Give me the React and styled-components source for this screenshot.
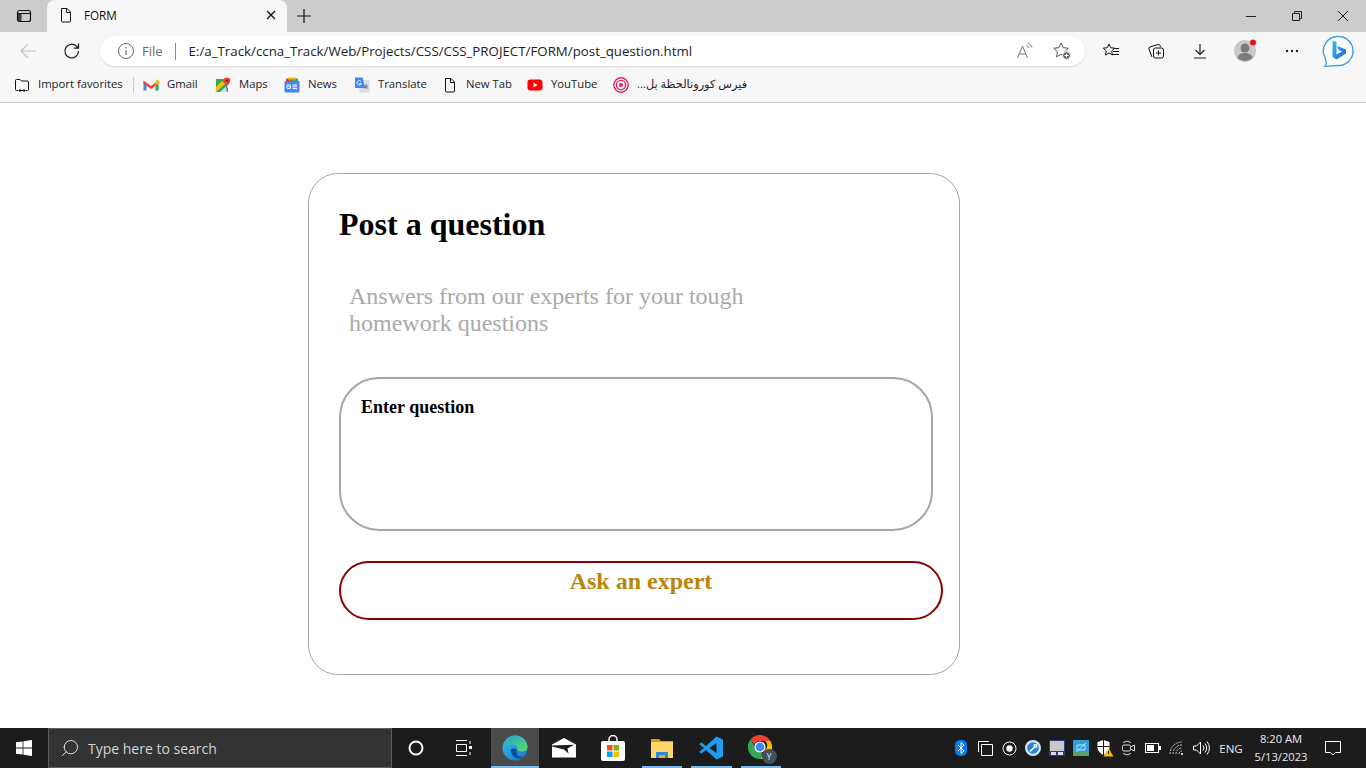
import React from 'react';
import styled, { createGlobalStyle } from 'styled-components';
import { Search } from 'lucide-react';

const GlobalStyle = createGlobalStyle`
  html, body { margin: 0; padding: 0; background: #fff; }
  body { width: 1366px; height: 768px; overflow: hidden; font-family: "Liberation Serif", serif; }
`;

const UI_FONT = '"Open Sans", "Noto Sans", "DejaVu Sans", sans-serif';

// browser top
function Svg({ size = 16, children }) {
  return <svg width={size} height={size} viewBox={`0 0 ${size} ${size}`} fill="none" stroke="currentColor" strokeWidth="1">{children}</svg>;
}

const PageIcon = () => (
  <Svg size={16}>
    <path d="M3.500 1.500h5.500l3.500 3.500v9a1 1 0 0 1-1 1h-7a1 1 0 0 1-1-1z M8.500 1.500v4h4" stroke="#111" />
  </Svg>
);

const TabsIcon = () => (
  <Svg size={16}>
    <rect x="1.500" y="2.500" width="13" height="11" rx="2" stroke="#111" strokeWidth="1.200" />
    <path d="M1.500 5.500h13" stroke="#111" />
    <rect x="2" y="5" width="3.500" height="8" fill="#111" stroke="none" opacity="0.75" />
  </Svg>
);

const GmailIcon = () => (
  <svg width="16" height="16" viewBox="0 0 16 16">
    <path d="M0.500 4.500v9h3V7z" fill="#4285f4" />
    <path d="M12.500 7v6.500h3v-9z" fill="#34a853" />
    <path d="M0.500 3.500 8 9l7.500-5.500v3L8 12 .5 6.500z" fill="#ea4335" />
    <path d="M12.500 4 14 2.800a1 1 0 0 1 1.500 .7v3L12.500 8.500z" fill="#fbbc04" />
  </svg>
);

const MapsIcon = () => (
  <svg width="16" height="16" viewBox="0 0 16 16">
    <path d="M1 2h11v13H1z" fill="#34a853" />
    <path d="M1 10 7 4l3 3-9 8z" fill="#fbbc04" />
    <path d="M5 15 11 9.500 12.500 15z" fill="#dfe3e8" />
    <path d="M1 2h5L1 7z" fill="#34a853" />
    <path d="M10 8 13 11v4h-1z" fill="#4285f4" />
    <path d="M12 0.500a3.300 3.300 0 0 1 3.300 3.300c0 2.200-2.300 3.600-3.300 6-1-2.400-3.300-3.800-3.300-6A3.300 3.300 0 0 1 12 .5z" fill="#ea4335" />
    <circle cx="12" cy="3.800" r="1.200" fill="#a50e0e" />
  </svg>
);

const NewsIcon = () => (
  <svg width="16" height="16" viewBox="0 0 16 16">
    <path d="M2 1.500h6v3H2z" fill="#ea4335" />
    <path d="M8 1.500h6v3H8z" fill="#34a853" />
    <path d="M4 0.500h8v2H4z" fill="#fbbc04" />
    <rect x="0.500" y="4" width="15" height="11.500" rx="1" fill="#4285f4" />
    <path d="M3 8h3.400v3.400H3V8M4.700 9.700h1.700M8.500 8h4.500M8.500 9.800h4.500M8.500 11.600h4.500" stroke="#fff" strokeWidth="1" fill="none" />
  </svg>
);

const TranslateIcon = () => (
  <svg width="16" height="16" viewBox="0 0 16 16">
    <path d="M7 3h8.500v12.500H5z" fill="#dadce0" />
    <path d="M12 6.500l.8 2 2 .2-1.600 1.300.5 2-1.700-1.100-1.700 1.100.5-2-1.600-1.300 2-.2z" fill="#80868b" />
    <path d="M1 0.500h7.500L11 11H1z" fill="#4285f4" />
    <path d="M7 4.500a2.200 2.200 0 1 0 .4 2H5.200" stroke="#fff" fill="none" strokeWidth="0.900" />
  </svg>
);

const YoutubeIcon = () => (
  <svg width="16" height="16" viewBox="0 0 16 16">
    <rect x="0.500" y="2.500" width="15" height="11" rx="3" fill="#f00" />
    <path d="M6.500 5.500 10.500 8l-4 2.500z" fill="#fff" />
  </svg>
);

const TargetIcon = () => (
  <svg width="16" height="16" viewBox="0 0 16 16" fill="none">
    <circle cx="8" cy="8" r="7.200" stroke="#e0245e" strokeWidth="1.400" />
    <circle cx="8" cy="8" r="4.600" stroke="#e0245e" strokeWidth="1.400" />
    <circle cx="8" cy="8" r="2" fill="#e0245e" />
  </svg>
);

const ImportIcon = () => (
  <Svg size={16}>
    <path d="M4 13.500H2.500a1 1 0 0 1-1-1v-9a1 1 0 0 1 1-1H6l1.500 1.500h6a1 1 0 0 1 1 1v7.500a1 1 0 0 1-1 1H12" stroke="#111" />
    <path d="M5 13.500h6M6.500 12 5 13.500 6.500 15M9.500 12l1.500 1.500L9.500 15" stroke="#111" />
  </Svg>
);

const Bookmarks = [
  { icon: <GmailIcon />, label: 'Gmail', w: 72 },
  { icon: <MapsIcon />, label: 'Maps', w: 69 },
  { icon: <NewsIcon />, label: 'News', w: 70 },
  { icon: <TranslateIcon />, label: 'Translate', w: 88 },
  { icon: <PageIcon />, label: 'New Tab', w: 85 },
  { icon: <YoutubeIcon />, label: 'YouTube', w: 86 },
];

const Chrome = styled.header`
  flex: none;
  display: flex;
  flex-direction: column;
  font-family: ${UI_FONT};
  color: #222;
`;

const TabStrip = styled.div`
  height: 32px;
  background: #cccccc;
  display: flex;
  align-items: flex-end;
  color: #111;
`;

const TabToggle = styled.div`
  width: 47px;
  height: 32px;
  display: flex;
  align-items: center;
  justify-content: center;
`;

const Tab = styled.div`
  width: 240px;
  height: 32px;
  box-sizing: border-box;
  padding: 0 8px 2px 11px;
  background: #f7f7f7;
  border-radius: 8px 8px 0 0;
  display: flex;
  align-items: center;
  gap: 10px;
  font-size: 11.7px;
`;

const TabTitle = styled.span`
  flex: 1;
`;

const NewTab = styled.div`
  width: 34px;
  height: 32px;
  display: flex;
  align-items: center;
  justify-content: center;
`;

const WindowButtons = styled.div`
  margin-left: auto;
  display: flex;
  height: 32px;
`;

const WindowButton = styled.div`
  width: 46px;
  height: 32px;
  display: flex;
  align-items: center;
  justify-content: center;
`;

const Toolbar = styled.div`
  height: 38px;
  background: #f7f7f7;
  display: flex;
  align-items: center;
  padding-left: 10px;
`;

const NavButton = styled.div`
  width: ${p => p.$w || 36}px;
  height: 30px;
  flex: none;
  display: flex;
  align-items: center;
  justify-content: center;
  color: ${p => p.$color || '#222'};
  position: relative;
`;

const AddressBar = styled.div`
  width: 985px;
  height: 30px;
  margin-left: 2px;
  margin-right: 4px;
  flex: none;
  box-sizing: border-box;
  padding: 0 5px 0 18px;
  background: #fff;
  border-radius: 15px;
  box-shadow: 0 1px 2px rgba(0, 0, 0, 0.12);
  display: flex;
  align-items: center;
  font-size: 13.300px;
`;

const FileLabel = styled.span`
  margin-left: 8px;
  font-size: 13px;
  color: #6a6a6a;
  padding-right: 12px;
  border-right: 1px solid #8a8a8a;
  line-height: 17px;
`;

const Url = styled.span`
  margin-left: 13px;
  flex: 1;
  color: #222;
  white-space: nowrap;
`;

const BookmarkBar = styled.div`
  height: 29px;
  padding: 0 0 3px 14px;
  background: #f7f7f7;
  border-bottom: 1px solid #c6c6c6;
  display: flex;
  align-items: center;
  font-size: 11.300px;
  line-height: 16px;
  white-space: nowrap;
`;

const Bookmark = styled.div`
  width: ${p => p.$w}px;
  flex: none;
  display: flex;
  align-items: center;
  gap: 8px;
  overflow: hidden;
`;

const BookmarkLabel = styled.span`
  margin-top: -2px;
`;

const BookmarkDivider = styled.div`
  width: 1px;
  height: 16px;
  background: #c8c8c8;
  margin-right: 9px;
`;

// page
const Shell = styled.div`
  width: 1366px;
  height: 768px;
  display: flex;
  flex-direction: column;
`;

const Page = styled.main`
  flex: 1;
  background: #fff;
  padding: 70px 0 0 308px;
`;

const Card = styled.section`
  width: 652px;
  height: 502px;
  box-sizing: border-box;
  border: 1px solid #aaa69d;
  border-radius: 30px;
  padding: 29px 0 0 30px;
`;

const Title = styled.h1`
  margin: 0;
  font-size: 32px;
  line-height: 42px;
  font-weight: bold;
  color: #000;
`;

const Subtitle = styled.p`
  margin: 38px 0 0 10px;
  width: 420px;
  font-size: 24px;
  line-height: 27px;
  color: #aaaaaa;
`;

const QuestionBox = styled.div`
  margin-top: 40px;
  width: 594px;
  height: 154px;
  box-sizing: border-box;
  border: 2px solid #aaa69d;
  border-radius: 40px;
  padding: 18px 20px;
  font-size: 18px;
  line-height: 21px;
  font-weight: bold;
  color: #000;
`;

const AskButton = styled.div`
  margin-top: 30px;
  width: 604px;
  height: 59px;
  box-sizing: border-box;
  border: 2px solid #8b0000;
  border-radius: 30px;
  padding-top: 4px;
  text-align: center;
  font-size: 24px;
  line-height: 28px;
  font-weight: bold;
  color: #b8860b;
`;

// taskbar
const Taskbar = styled.footer`
  flex: none;
  height: 40px;
  background: #1c1c1c;
  display: flex;
  align-items: stretch;
  font-family: ${UI_FONT};
  color: #fff;
`;

const StartButton = styled.div`
  width: 48px;
  display: flex;
  align-items: center;
  justify-content: center;
`;

const SearchBox = styled.div`
  width: 344px;
  box-sizing: border-box;
  background: #333333;
  border: 1px solid #5f5f5f;
  display: flex;
  align-items: center;
  gap: 8px;
  padding-left: 11px;
  font-size: 14px;
  color: #d4d4d4;
`;

const TaskButton = styled.div`
  width: ${p => p.$w || 49}px;
  box-sizing: border-box;
  padding-right: ${p => p.$shift || 0}px;
  flex: none;
  position: relative;
  display: flex;
  align-items: center;
  justify-content: center;
  background: ${p => (p.$active ? '#4a4a4a' : 'transparent')};
  &::after {
    content: "";
    display: ${p => (p.$open ? 'block' : 'none')};
    position: absolute;
    left: ${p => (p.$active ? 0 : 5)}px;
    right: ${p => (p.$active ? 0 : 4)}px;
    bottom: 0;
    height: 2px;
    background: #76b9ed;
  }
`;

const Tray = styled.div`
  margin-left: auto;
  display: flex;
  align-items: center;
`;

const TrayIcon = styled.div`
  width: 24px;
  height: 40px;
  flex: none;
  display: flex;
  align-items: center;
  justify-content: center;
`;

const Lang = styled.div`
  width: 30px;
  margin-left: 3px;
  font-size: 11.500px;
  color: #e8e8e8;
  text-align: center;
`;

const Clock = styled.div`
  width: 56px;
  margin-left: 7px;
  font-size: 11.200px;
  line-height: 18px;
  text-align: center;
  color: #e8e8e8;
  white-space: nowrap;
`;

const Notify = styled.div`
  width: 46px;
  margin: 0 10px 0 1px;
  height: 40px;
  display: flex;
  align-items: center;
  justify-content: center;
`;

const WindowsLogo = () => (
  <svg width="16" height="16" viewBox="0 0 16 16" fill="#fff">
    <path d="M0 2.300 6.600 1.400v6.100H0zM7.400 1.300 16 0v7.500H7.400zM0 8.400h6.600v6.200L0 13.700zM7.400 8.400H16V16l-8.600-1.200z" />
  </svg>
);

const EdgeIcon = () => (
  <svg width="26" height="26" viewBox="0 0 26 26">
    <defs>
      <linearGradient id="edgeA" x1="0" y1="0" x2="1" y2="1">
        <stop offset="0" stopColor="#35c1f1" />
        <stop offset="1" stopColor="#1b6fc4" />
      </linearGradient>
      <linearGradient id="edgeB" x1="0" y1="0" x2="1" y2="1">
        <stop offset="0" stopColor="#1f9fd8" />
        <stop offset="1" stopColor="#5fdc6a" />
      </linearGradient>
    </defs>
    <circle cx="13" cy="13" r="12.500" fill="url(#edgeA)" />
    <path d="M1 11C3 4 9 .5 13 .5c7 0 12.500 5.500 12.500 11.500 0 3-2.500 4.500-5.500 4.500-2.500 0-4.500-.8-4.500-2 0-2-1-5-5-5-4 0-7 2-9.500 1.500z" fill="url(#edgeB)" />
    <path d="M9 15c0 5 4 8.500 8 8.500 2 0 4-1 5-2-3 1-7 0-7.500-4-.2-2 .5-3 .5-3-3-1.500-6-1.500-6 .5z" fill="#0c4f9e" />
  </svg>
);

const MailIcon = () => (
  <svg width="24" height="20" viewBox="0 0 24 20">
    <path d="M0 6.500 12 0l12 6.500V19.500H0z" fill="#fff" />
    <path d="M0 7.500 22 6.800 15.500 10.500 16.500 15.500 12 11.500 0 8.500z" fill="#1c1c1c" />
  </svg>
);

const StoreIcon = () => (
  <svg width="24" height="26" viewBox="0 0 24 26">
    <path d="M8 7V4.500a4 4 0 0 1 8 0V7" stroke="#fff" strokeWidth="1.500" fill="none" />
    <rect x="0" y="6" width="24" height="20" rx="2" fill="#fff" />
    <rect x="6" y="10" width="5.500" height="5.500" fill="#f25022" />
    <rect x="12.500" y="10" width="5.500" height="5.500" fill="#7fba00" />
    <rect x="6" y="16.500" width="5.500" height="5.500" fill="#00a4ef" />
    <rect x="12.500" y="16.500" width="5.500" height="5.500" fill="#ffb900" />
  </svg>
);

const FolderIcon = () => (
  <svg width="22" height="20" viewBox="0 0 22 20">
    <path d="M0 1h8l2 2h12v4H0z" fill="#d99a1c" />
    <path d="M0 4h22v16H0z" fill="#ffd768" />
    <path d="M5 14h12v6h-3v-3H8v3H5z" fill="#2b88d8" />
    <path d="M8 17h6v3H8z" fill="#e8a92a" />
  </svg>
);

const VscodeIcon = () => (
  <svg width="24" height="24" viewBox="0 0 24 24">
    <path d="M17.500 0.500 24 3.500v17l-6.500 3L7 14l-4.500 3.500L0 16l5-4-5-4 2.500-1.500L7 10z" fill="#1f9cf0" />
    <path d="M17.500 7 10.500 12l7 5z" fill="#1c1c1c" />
  </svg>
);

const Badge = styled.span`
  position: absolute;
  right: -3px;
  bottom: -3px;
  width: 15px;
  height: 15px;
  border-radius: 50%;
  background: #42505c;
  color: #dfe3e6;
  font-size: 9px;
  line-height: 15px;
  text-align: center;
`;

const ChromeWrap = styled.span`
  position: relative;
  display: block;
  width: 26px;
  height: 26px;
`;

const ChromeIcon = () => (
  <ChromeWrap>
    <svg width="24" height="24" viewBox="0 0 24 24">
      <path d="M12 0a12 12 0 0 1 10.400 6H12a6 6 0 0 0-5.600 3.800L2.500 4.500A12 12 0 0 1 12 0z" fill="#ea4335" />
      <path d="M22.400 6A12 12 0 0 1 12 24l5.200-9a6 6 0 0 0 0-9z" fill="#fbbc04" />
      <path d="M2.500 4.500 7.500 13a6 6 0 0 0 7 4.500L12 24A12 12 0 0 1 2.500 4.500z" fill="#34a853" />
      <circle cx="12" cy="12" r="5" fill="#4285f4" stroke="#fff" strokeWidth="1.200" />
    </svg>
    <Badge>Y</Badge>
  </ChromeWrap>
);

const BingIcon = () => (
  <svg width="32" height="32" viewBox="0 0 32 32">
    <defs>
      <linearGradient id="bingA" x1="0" y1="0" x2="1" y2="1">
        <stop offset="0" stopColor="#36bdf0" />
        <stop offset="1" stopColor="#2a62d8" />
      </linearGradient>
    </defs>
    <path d="M16.500 1.500a14.500 14.500 0 0 1 0 29c-4 0-8 .5-13.500 1 1.500-2 1.500-5 .2-8.500A14.500 14.500 0 0 1 16.500 1.500z" fill="#fff" stroke="#3aa0ea" strokeWidth="1.400" />
    <path d="M10.500 5.500 14.500 7v12.500l5.500-3-3.500-1.800-1.300-3.700L24 14.500v4l-9.500 6-4-2.500z" fill="url(#bingA)" />
  </svg>
);

export default function App() {
  return (
    <Shell>
      <GlobalStyle />
      <Chrome>
        <TabStrip>
          <TabToggle><TabsIcon /></TabToggle>
          <Tab>
            <PageIcon />
            <TabTitle>FORM</TabTitle>
            <Svg size={16}><path d="M4 4l8 8M12 4l-8 8" stroke="#111" strokeWidth="1.300" /></Svg>
          </Tab>
          <NewTab><Svg size={16}><path d="M8 1v14M1 8h14" stroke="#111" strokeWidth="1.200" /></Svg></NewTab>
          <WindowButtons>
            <WindowButton><Svg size={12}><path d="M1 6.500h10" stroke="#222" /></Svg></WindowButton>
            <WindowButton><Svg size={12}><path d="M1.500 3.500h7v7h-7zM3.500 3.500v-2h7v7h-2" stroke="#222" /></Svg></WindowButton>
            <WindowButton><Svg size={12}><path d="M1 1l10 10M11 1L1 11" stroke="#222" /></Svg></WindowButton>
          </WindowButtons>
        </TabStrip>

        <Toolbar>
          <NavButton $color="#c4c4c4">
            <Svg size={18}><path d="M17 9H2M9 2 2 9l7 7" stroke="#c4c4c4" strokeWidth="1.200" /></Svg>
          </NavButton>
          <NavButton $w={52}>
            <Svg size={18}><path d="M15.500 9a6.800 6.800 0 1 1-2-4.800L15.500 6.200M15.500 1.500v4.700h-4.700" stroke="#222" strokeWidth="1.300" /></Svg>
          </NavButton>
          <AddressBar>
            <Svg size={16}>
              <circle cx="8" cy="8" r="7.500" stroke="#6a6a6a" />
              <path d="M8 7v5M8 4v1.500" stroke="#6a6a6a" strokeWidth="1.200" />
            </Svg>
            <FileLabel>File</FileLabel>
            <Url>E:/a_Track/ccna_Track/Web/Projects/CSS/CSS_PROJECT/FORM/post_question.html</Url>
            <NavButton $w={37}>
              <Svg size={18}>
                <path d="M1.500 16 6.500 4l5 12M3.200 12h6.600" stroke="#777" />
                <path d="M10.500 3.500a4 4 0 0 1 2.500 2.500M12 1a7 7 0 0 1 4 4.500" stroke="#777" />
              </Svg>
            </NavButton>
            <NavButton $w={37}>
              <Svg size={20}>
                <path d="M9 2l2.200 4.600 5 .7-3.600 3.500.9 5L9 13.400 4.500 15.800l.9-5L1.800 7.300l5-.7z" stroke="#555" />
                <circle cx="14.500" cy="14.500" r="4" fill="#666" stroke="#fff" />
                <path d="M12.500 14.500h4M14.500 12.500v4" stroke="#fff" />
              </Svg>
            </NavButton>
          </AddressBar>
          <NavButton $w={44}>
            <Svg size={18}>
              <path d="M7 2l1.700 3.700 4 .5-3 2.800.8 4L7 11l-3.500 2 .8-4-3-2.800 4-.5z" stroke="#111" />
              <path d="M12 6.500h5M11 9.500h6M10 12.500h7" stroke="#111" />
            </Svg>
          </NavButton>
          <NavButton $w={45}>
            <Svg size={18}>
              <path d="M5 15 2 7a1.500 1.500 0 0 1 1-2l8-2.500a1.500 1.500 0 0 1 2 1L13.500 5" stroke="#111" />
              <rect x="6.500" y="6" width="10" height="10" rx="2" stroke="#111" fill="#f7f7f7" />
              <path d="M11.500 8.500v5M9 11h5" stroke="#111" />
            </Svg>
          </NavButton>
          <NavButton $w={44}>
            <Svg size={16}><path d="M8 1v10M3.500 7 8 11.500 12.500 7M2 15h12" stroke="#222" strokeWidth="1.200" /></Svg>
          </NavButton>
          <NavButton $w={46}>
            <svg width="24" height="24" viewBox="0 0 24 24">
              <circle cx="12" cy="12" r="11" fill="#c9c9c9" />
              <circle cx="12" cy="9" r="4.500" fill="#7b7b7b" />
              <path d="M4.500 19a7.500 5 0 0 1 15 0 11 11 0 0 1-15 0z" fill="#7b7b7b" />
              <circle cx="20" cy="3.500" r="3" fill="#e81123" />
            </svg>
          </NavButton>
          <NavButton $w={48}>
            <svg width="16" height="4" viewBox="0 0 16 4" fill="#222">
              <circle cx="3" cy="2" r="1.200" /><circle cx="8" cy="2" r="1.200" /><circle cx="13" cy="2" r="1.200" />
            </svg>
          </NavButton>
          <NavButton $w={44}><BingIcon /></NavButton>
        </Toolbar>

        <BookmarkBar>
          <Bookmark $w={119}><ImportIcon /><BookmarkLabel>Import favorites</BookmarkLabel></Bookmark>
          <BookmarkDivider />
          {Bookmarks.map(b => (
            <Bookmark key={b.label} $w={b.w}>{b.icon}<BookmarkLabel>{b.label}</BookmarkLabel></Bookmark>
          ))}
          <Bookmark $w={140}><TargetIcon /><BookmarkLabel dir="rtl">فيرس كورونالحظة بل...</BookmarkLabel></Bookmark>
        </BookmarkBar>
      </Chrome>

      <Page>
        <Card>
          <Title>Post a question</Title>
          <Subtitle>Answers from our experts for your tough homework questions</Subtitle>
          <QuestionBox>Enter question</QuestionBox>
          <AskButton>Ask an expert</AskButton>
        </Card>
      </Page>

      <Taskbar>
        <StartButton><WindowsLogo /></StartButton>
        <SearchBox>
          <Search size={20} color="#e0e0e0" strokeWidth={1.200} style={{ transform: 'scaleX(-1)' }} />
          Type here to search
        </SearchBox>
        <TaskButton $w={48}>
          <svg width="16" height="16" viewBox="0 0 16 16" fill="none"><circle cx="8" cy="8" r="6.500" stroke="#fff" strokeWidth="2" /></svg>
        </TaskButton>
        <TaskButton $w={51} $shift={3}>
          <svg width="18" height="16" viewBox="0 0 18 16" fill="none" stroke="#fff">
            <path d="M1 .5h11M1 15.500h11M1.500 4.500h10v7h-10z" />
            <path d="M15 1v3M15 12v3" />
            <rect x="14" y="6" width="3" height="3" fill="#fff" stroke="none" />
          </svg>
        </TaskButton>
        <TaskButton $w={48} $active $open><EdgeIcon /></TaskButton>
        <TaskButton><MailIcon /></TaskButton>
        <TaskButton><StoreIcon /></TaskButton>
        <TaskButton $open><FolderIcon /></TaskButton>
        <TaskButton $w={50} $open><VscodeIcon /></TaskButton>
        <TaskButton $open><ChromeIcon /></TaskButton>

        <Tray>
          <TrayIcon>
            <svg width="12" height="16" viewBox="0 0 12 16">
              <rect width="12" height="16" rx="5" fill="#0a7cf0" />
              <path d="M3 5l6 6-3 2.500v-11L9 5l-6 6" stroke="#fff" fill="none" />
            </svg>
          </TrayIcon>
          <TrayIcon>
            <svg width="15" height="15" viewBox="0 0 15 15" fill="none" stroke="#fff">
              <path d="M.5 11V.5H11M3.500 3.500h11v11h-11z" />
            </svg>
          </TrayIcon>
          <TrayIcon>
            <svg width="15" height="15" viewBox="0 0 15 15">
              <circle cx="7.500" cy="7.500" r="6.500" fill="none" stroke="#fff" />
              <circle cx="7.500" cy="7.500" r="3.200" fill="#fff" />
            </svg>
          </TrayIcon>
          <TrayIcon>
            <svg width="16" height="16" viewBox="0 0 16 16">
              <circle cx="8" cy="8" r="8" fill="#cfe6fa" />
              <circle cx="8" cy="8" r="5.800" fill="#2a85d8" />
              <path d="M5 11.500 9 7.500M9.500 5h2v2h-2z" stroke="#fff" strokeWidth="1.500" />
            </svg>
          </TrayIcon>
          <TrayIcon>
            <svg width="16" height="16" viewBox="0 0 16 16">
              <rect width="16" height="16" fill="#2b3a8c" />
              <rect x="1" y="1" width="14" height="10" fill="#c8c8c8" />
              <rect x="2" y="12" width="5" height="3" fill="#dcdcdc" />
              <rect x="9" y="12" width="5" height="3" fill="#dcdcdc" />
            </svg>
          </TrayIcon>
          <TrayIcon>
            <svg width="16" height="16" viewBox="0 0 16 16">
              <rect width="16" height="16" rx="1" fill="#2f9fd8" />
              <path d="M2 13 13 3M4 5h8v5H4z" stroke="#b9e3f5" fill="none" />
              <rect x="0" y="12" width="16" height="4" fill="#5aa06a" />
            </svg>
          </TrayIcon>
          <TrayIcon>
            <svg width="18" height="18" viewBox="0 0 18 18">
              <path d="M7.500 1l6 2v5c0 4-3 6.500-6 8-3-1.500-6-4-6-8V3z" fill="#fff" />
              <path d="M7.500 1v15M1.500 7.500h12" stroke="#1c1c1c" />
              <path d="M12.500 9l5 8.500h-10z" fill="#fbbc04" />
              <path d="M12.500 12v3" stroke="#1c1c1c" />
            </svg>
          </TrayIcon>
          <TrayIcon>
            <svg width="16" height="18" viewBox="0 0 16 18" fill="none" stroke="#d8d8d8">
              <path d="M2 3.500a7 7 0 0 1 8 0M2 14.500a7 7 0 0 0 8 0" />
              <rect x="1.500" y="6" width="8" height="6" rx="1.500" />
              <path d="M9.500 8l4-2v6l-4-2" />
            </svg>
          </TrayIcon>
          <TrayIcon>
            <svg width="16" height="10" viewBox="0 0 16 10">
              <rect x=".5" y=".5" width="13" height="9" fill="none" stroke="#fff" />
              <rect x="2" y="2" width="7" height="6" fill="#fff" />
              <rect x="14" y="3" width="2" height="4" fill="#fff" />
            </svg>
          </TrayIcon>
          <TrayIcon>
            <svg width="16" height="14" viewBox="0 0 16 14" fill="none" stroke="#cfcfcf">
              <path d="M1 13A12 12 0 0 1 13 1M4 13a9 9 0 0 1 9-9M7 13a6 6 0 0 1 6-6M10 13a3 3 0 0 1 3-3" strokeDasharray="2 1" />
              <circle cx="13" cy="13" r="1" fill="#fff" stroke="none" />
            </svg>
          </TrayIcon>
          <TrayIcon>
            <svg width="17" height="14" viewBox="0 0 17 14" fill="none" stroke="#fff">
              <path d="M.5 5v4h3l4 4V1l-4 4z" />
              <path d="M10 4.500a4 4 0 0 1 0 5M12 2.500a7 7 0 0 1 0 9M14 .5a10 10 0 0 1 0 13" />
            </svg>
          </TrayIcon>
          <Lang>ENG</Lang>
          <Clock>8:20 AM<br />5/13/2023</Clock>
          <Notify>
            <svg width="18" height="18" viewBox="0 0 18 18" fill="none" stroke="#fff">
              <path d="M1.500 2.500h15v11h-5L9 16l-2.500-2.500h-5z" />
            </svg>
          </Notify>
        </Tray>
      </Taskbar>
    </Shell>
  );
}
